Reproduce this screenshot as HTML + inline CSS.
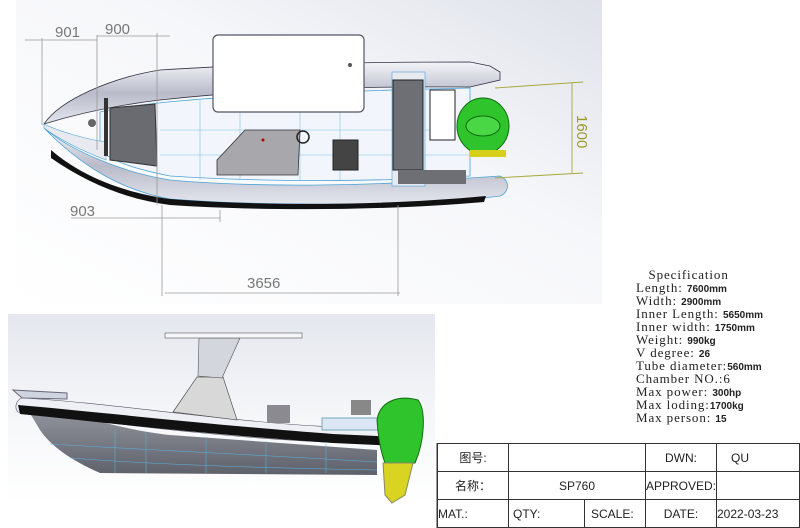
<!DOCTYPE html>
<html><head><meta charset="utf-8"><style>
html,body{margin:0;padding:0;background:#fff;width:800px;height:528px;overflow:hidden;position:relative}
svg{position:absolute;left:0;top:0}
.spec{position:absolute;left:636px;top:268px;font-family:"Liberation Serif","Noto Serif CJK SC",serif;font-size:13px;letter-spacing:0.9px;color:#222;white-space:pre}
.spec div{height:13px;line-height:13px;overflow:visible}
.spec b{font-family:"Liberation Sans",sans-serif;font-size:10px;letter-spacing:0;font-weight:bold;color:#222;line-height:10px}
table{position:absolute;left:437px;top:443px;border-collapse:collapse;font-family:"Liberation Sans","Noto Sans CJK SC",sans-serif;font-size:12px;color:#222}
td{border:1px solid #333;height:27px;padding:0;text-align:center}
</style></head><body>
<svg width="800" height="528" viewBox="0 0 800 528">
<defs>
<linearGradient id="bg1" x1="0" y1="1" x2="1" y2="0"><stop offset="0" stop-color="#fff"/><stop offset="0.6" stop-color="#f6f7fa"/><stop offset="1" stop-color="#dfe2ea"/></linearGradient>
<linearGradient id="bg2" x1="0" y1="0" x2="0" y2="1"><stop offset="0" stop-color="#e4e7ee"/><stop offset="0.6" stop-color="#f7f8fa"/><stop offset="1" stop-color="#fff"/></linearGradient>
<linearGradient id="tube" x1="0" y1="0" x2="0" y2="1"><stop offset="0" stop-color="#f4f5fa"/><stop offset="0.5" stop-color="#b9bbc9"/><stop offset="1" stop-color="#e4e6ee"/></linearGradient>
<linearGradient id="hull" x1="0" y1="0" x2="0" y2="1"><stop offset="0" stop-color="#9a9ca6"/><stop offset="1" stop-color="#5f616a"/></linearGradient>
</defs>
<rect x="16" y="0" width="586" height="304" fill="url(#bg1)"/>
<path d="M44,128 C70,150 120,172 170,180 C260,188 380,186 470,178 L500,176 C510,180 510,192 500,196 L484,198 C380,206 260,206 170,199 C120,190 80,165 44,128Z" fill="url(#tube)" stroke="#4aa3d8" stroke-width="0.8"/>
<path d="M51,158 C90,185 130,200 170,205 C260,211 380,211 484,202 L486,196 C380,206 260,206 170,199 C120,192 80,175 51,150Z" fill="#111"/>
<path d="M100,112 C160,98 300,92 470,88 L470,176 C380,182 260,182 170,176 C130,168 110,160 100,150Z" fill="#f2f5fb" stroke="#4aa3d8" stroke-width="0.8"/>
<g stroke="#7ec2e8" stroke-width="0.6" fill="none">
<path d="M160,130 H470 M160,155 H470 M200,100 V180 M240,95 V180 M300,95 V180 M340,95 V180"/></g>
<path d="M44,124 C60,100 110,78 160,70 C250,64 350,62 470,62 L490,66 L500,72 L500,80 L470,87 C360,86 250,90 160,100 C110,106 70,116 44,124Z" fill="url(#tube)" stroke="#334" stroke-width="0.8"/>
<path d="M44,124 C60,132 90,140 106,142 L106,160 C80,150 60,140 44,128Z" fill="#e8eaf0" stroke="#4aa3d8" stroke-width="0.6"/>
<rect x="104" y="98" width="4" height="58" fill="#333"/>
<path d="M110,108 L155,104 L157,166 L110,160Z" fill="#6a6b70" stroke="#333"/>
<circle cx="92" cy="123" r="4" fill="#666"/>
<path d="M217,160 L245,130 L300,130 L298,175 L217,175Z" fill="#a8a8ac" stroke="#333" stroke-width="0.8"/>
<circle cx="263" cy="140" r="1.5" fill="#b00"/>
<circle cx="303" cy="137" r="6" fill="none" stroke="#222" stroke-width="1.5"/>
<rect x="333" y="140" width="25" height="30" fill="#444" stroke="#222"/>
<rect x="213" y="35" width="151" height="77" rx="5" fill="#fff" stroke="#556" stroke-width="1.2"/>
<circle cx="350" cy="65" r="2" fill="#555"/>
<rect x="392" y="72" width="33" height="114" fill="#e8eaf0" stroke="#4aa3d8" stroke-width="0.6"/>
<rect x="393" y="80" width="30" height="90" fill="#6e6f75" stroke="#222"/>
<rect x="430" y="90" width="25" height="50" fill="#fff" stroke="#222"/>
<rect x="398" y="170" width="68" height="14" fill="#6e6f75"/>
<ellipse cx="483" cy="126" rx="26" ry="28" fill="#2fc42c" stroke="#0f6a0f"/>
<ellipse cx="483" cy="126" rx="17" ry="10" fill="#49d745" stroke="#0f6a0f"/>
<rect x="470" y="150" width="36" height="7" fill="#d6d01a"/>
<g stroke="#999" stroke-width="0.8" fill="none">
<path d="M25,40 H97 M97,36 H170 M42,38 V125 M97,35 V150 M157,33 V205"/>
<path d="M71,218 H220 M162,205 V296 M220,210 V222 M165,293 H400 M398,205 V296"/>
</g>
<g font-family="Liberation Sans,sans-serif" font-size="15" fill="#777">
<text x="55" y="37">901</text><text x="105" y="34">900</text>
<text x="70" y="216">903</text><text x="247" y="288">3656</text>
</g>
<g stroke="#a8a83a" stroke-width="0.9" fill="none"><path d="M495,88 L583,82 M495,178 L583,173 M572,83 V173"/></g>
<text x="0" y="0" transform="translate(577,115) rotate(90)" font-family="Liberation Sans,sans-serif" font-size="15" fill="#9a9a2a">1600</text>
<rect x="8" y="314" width="427" height="189" fill="url(#bg2)"/>
<path d="M22,400 C60,410 120,430 170,435 L377,450 L377,475 L100,473 C70,460 50,445 40,430Z" fill="url(#hull)"/>
<g stroke="#58b4e8" stroke-width="0.5" fill="none"><path d="M50,444 C150,450 260,455 377,462 M70,458 C160,465 270,468 377,470 M115,430 V473 M146,432 V473 M206,437 V473 M266,441 V473 M326,444 V473"/></g>
<path d="M13,390 L67,393 L67,399 L22,398Z" fill="#cfd4e0" stroke="#667"/>
<path d="M22,398 C100,402 200,418 300,425 C350,428 390,430 413,434 C418,436 418,444 413,446 L350,443 C250,440 150,428 18,412 C14,408 16,400 22,398Z" fill="#eef0f6" stroke="#556" stroke-width="0.6"/>
<path d="M18,405 C100,412 200,424 333,434 L397,437 L397,446 L333,443 C200,434 100,422 20,414Z" fill="#111"/>
<path d="M173,412 L197,377 L223,377 L237,420Z" fill="#d8d8d8" stroke="#555" stroke-width="0.7"/>
<path d="M199,338 L240,338 L222,378 L198,376Z" fill="#d4d6de" stroke="#555" stroke-width="0.6"/>
<rect x="165" y="333" width="137" height="5" fill="#f4f6fa" stroke="#555" stroke-width="0.6"/>
<rect x="267" y="405" width="23" height="18" fill="#8a8a90"/>
<rect x="322" y="418" width="60" height="12" fill="#dde6f4" stroke="#7ab"/>
<rect x="351" y="400" width="20" height="15" fill="#888"/>
<path d="M377,420 C380,400 400,395 418,400 C426,410 425,440 415,463 L385,463 C380,450 378,435 377,420Z" fill="#2fc42c" stroke="#0f6a0f"/>
<path d="M383,463 L413,463 L405,495 L392,503 L385,495Z" fill="#d9d422" stroke="#886"/>
<line x1="437" y1="443" x2="437" y2="528" stroke="#333"/>
</svg>
<div class="spec"><div>   Specification</div><div>Length: <b>7600mm</b></div><div>Width: <b>2900mm</b></div><div>Inner Length: <b>5650mm</b></div><div>Inner width: <b>1750mm</b></div><div>Weight: <b>990kg</b></div><div>V degree: <b>26</b></div><div>Tube diameter:<b>560mm</b></div><div>Chamber NO.:6</div><div>Max power: <b>300hp</b></div><div>Max loding:<b>1700kg</b></div><div>Max person: <b>15</b></div></div>
<table>
<tr><td style="width:70px">图号:</td><td colspan="2" style="width:155px"></td><td style="width:66px">DWN:</td><td style="width:68px;text-align:left;padding-left:14px">QU</td></tr>
<tr><td>名称：</td><td colspan="2">SP760</td><td>APPROVED:</td><td></td></tr>
<tr><td style="text-align:left">MAT.:</td><td style="width:71px;text-align:left;padding-left:4px">QTY:</td><td style="text-align:left;padding-left:6px">SCALE:</td><td>DATE:</td><td style="text-align:left">2022-03-23</td></tr>
</table>
</body></html>
